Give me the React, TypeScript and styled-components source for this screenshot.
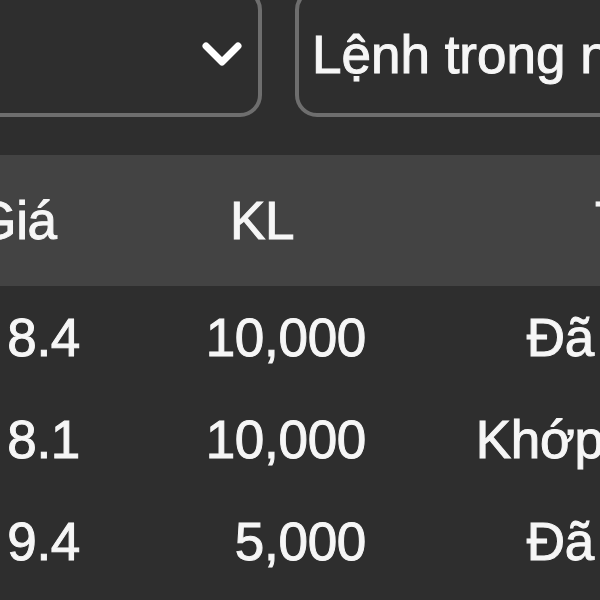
import React from 'react';
import styled, { createGlobalStyle } from 'styled-components';

const GlobalStyle = createGlobalStyle`
  html, body {
    margin: 0;
    padding: 0;
    background: #2e2e2e;
  }
`;

const Screen = styled.div`
  width: 600px;
  height: 600px;
  overflow: hidden;
  background: #2e2e2e;
  font-family: 'Liberation Sans', Arial, sans-serif;
  color: #f6f6f6;
  -webkit-text-stroke: 1px #f6f6f6;
`;

const Canvas = styled.div`
  width: 1000px;
  margin: -12px 0 0 -78px;
`;

const Toolbar = styled.div`
  display: flex;
  gap: 33px;
`;

const Select = styled.div<{ $width: number }>`
  box-sizing: border-box;
  width: ${(p) => p.$width}px;
  height: 129px;
  flex: none;
  display: flex;
  align-items: center;
  justify-content: space-between;
  padding: 4px 16px 0 13px;
  border: 4px solid #6e6e6e;
  border-radius: 22px;
  font-size: 53px;
  white-space: nowrap;
  overflow: hidden;
`;

const Table = styled.div`
  margin-top: 38px;
`;

const Row = styled.div<{ $head?: boolean }>`
  display: grid;
  grid-template-columns: 188px 314px 406px;
  align-items: center;
  height: ${(p) => (p.$head ? 131 : 102)}px;
  background: ${(p) => (p.$head ? '#434343' : 'transparent')};
  font-size: 53px;
  letter-spacing: -0.3px;
`;

const Cell = styled.div<{ $align: 'left' | 'center' | 'right'; $pad?: number }>`
  text-align: ${(p) => p.$align};
  padding-right: ${(p) => p.$pad ?? 0}px;
  white-space: nowrap;
`;

const Chevron = () => (
  <svg width="40" height="26" viewBox="0 0 40 26">
    <polyline
      points="4,4 20,20 36,4"
      fill="none"
      stroke="#ffffff"
      strokeWidth="7"
      strokeLinecap="round"
      strokeLinejoin="round"
    />
  </svg>
);

const orders = [
  { price: '8.4', qty: '10,000', status: 'Đã khớp' },
  { price: '8.1', qty: '10,000', status: 'Khớp 1 phần' },
  { price: '9.4', qty: '5,000', status: 'Đã khớp' },
];

export default function App() {
  return (
    <Screen>
      <GlobalStyle />
      <Canvas>
        <Toolbar>
          <Select $width={340}>
            <span />
            <Chevron />
          </Select>
          <Select $width={500}>
            <span>Lệnh trong ngày</span>
          </Select>
        </Toolbar>
        <Table>
          <Row $head>
            <Cell $align="center">Giá</Cell>
            <Cell $align="center" $pad={10}>KL</Cell>
            <Cell $align="center">TT</Cell>
          </Row>
          {orders.map((o, i) => (
            <Row key={i}>
              <Cell $align="right" $pad={30}>{o.price}</Cell>
              <Cell $align="right" $pad={58}>{o.qty}</Cell>
              <Cell $align="center">{o.status}</Cell>
            </Row>
          ))}
        </Table>
      </Canvas>
    </Screen>
  );
}
